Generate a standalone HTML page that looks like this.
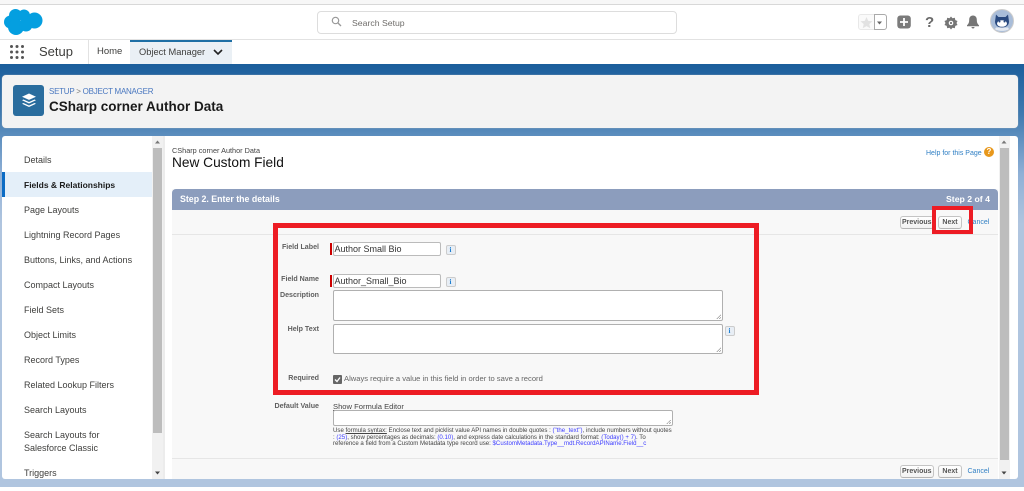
<!DOCTYPE html>
<html><head><meta charset="utf-8"><style>
html,body{margin:0;padding:0;background:#fff}
body{width:1024px;height:491px;position:relative;overflow:hidden;font-family:"Liberation Sans",sans-serif;color:#333}
#w{position:absolute;left:0;top:0;width:1024px;height:491px;overflow:hidden;background:#fff;filter:blur(.35px)}
.a{position:absolute;white-space:nowrap}
.side{left:24px;font-size:9px;color:#3e3e3c;line-height:13px}
.lbl{font-size:7.1px;font-weight:bold;color:#5f5f5f;text-align:right;width:60px;line-height:10px}
.inp{background:#fff;border:1px solid #bbb;border-radius:2px;box-sizing:border-box;font-size:9px;line-height:12px;padding-left:1px;color:#333}
.ta{background:#fff;border:1px solid #b0b0b0;border-radius:2px;box-sizing:border-box}
.ta:after{content:"";position:absolute;right:1px;bottom:1px;width:5px;height:5px;background:linear-gradient(135deg,transparent 55%,#999 55%,#999 65%,transparent 65%,transparent 78%,#999 78%,#999 90%,transparent 90%)}
.i{width:10px;height:10px;box-sizing:border-box;background:#e8eef5;border:1px solid #ccc;border-radius:2px;font-size:7px;font-weight:bold;color:#1f7fd0;text-align:center;line-height:8px;font-family:"Liberation Serif",serif}
.btn{background:linear-gradient(#fff,#f2f2f2);border:1px solid #c4c4c4;border-bottom-color:#b5b5b5;border-radius:3px;box-sizing:border-box;font-size:7px;font-weight:bold;color:#555;text-align:center;line-height:10px;padding-top:1px;height:13px}
.blue{color:#2f7fc4}
.hint{font-size:6.1px;line-height:7px;color:#444;left:333px}
.hint b{font-weight:normal;color:#3d3dff}
.bar{background:#c00;width:2px;height:12px;left:330px}
</style></head><body><div id="w">
<div class="a" style="left:0;top:0;width:1024px;height:5px;background:#f7f7f7;border-bottom:1px solid #d8d8d8;box-sizing:border-box"></div>
<svg class="a" style="left:0;top:0" width="50" height="40" viewBox="0 0 50 40" fill="#049fe0"><circle cx="10.500" cy="22" r="6.500"/><circle cx="15.500" cy="15.500" r="6.500"/><circle cx="24" cy="15.500" r="6"/><circle cx="34.500" cy="20.500" r="8"/><circle cx="16" cy="27" r="8"/><circle cx="26" cy="25" r="6.500"/></svg>
<div class="a" style="left:317px;top:11px;width:360px;height:23px;border:1px solid #ddd;border-radius:4px;box-sizing:border-box;background:#fff"></div>
<svg class="a" style="left:331px;top:16px" width="11" height="11" viewBox="0 0 11 11"><circle cx="4.500" cy="4.500" r="3.200" fill="none" stroke="#999" stroke-width="1.200"/><path d="M7 7l3 3" stroke="#999" stroke-width="1.300"/></svg>
<div class="a" style="left:352px;top:16.500px;font-size:8.700px;color:#706e6b;line-height:12px">Search Setup</div>
<div class="a" style="left:858px;top:14px;width:29px;height:16px;border:1px solid #e8e8e8;border-radius:3px;box-sizing:border-box;background:#fafafa"></div>
<div class="a" style="left:874px;top:14px;width:13px;height:16px;border:1px solid #aaa;border-radius:0 3px 3px 0;box-sizing:border-box;background:#fff"></div>
<svg class="a" style="left:860px;top:16px" width="40" height="14" viewBox="0 0 40 14"><path d="M6.500 1l1.700 3.900 4.300.4-3.200 2.800 1 4.200-3.800-2.200-3.800 2.200 1-4.200-3.200-2.800 4.300-.4z" fill="#e2e2e2"/><path d="M17 5.500h5l-2.500 3z" fill="#666"/></svg>
<svg class="a" style="left:896px;top:14px" width="16" height="16" viewBox="0 0 16 16"><rect x="1.300" y="1.500" width="13.500" height="13" rx="3" fill="#7b7b7b"/><path d="M8 4v8M4 8h8" stroke="#fff" stroke-width="1.800"/></svg>
<div class="a" style="left:925px;top:13.500px;font-size:15px;color:#6a6a6a;line-height:18px;font-weight:bold">?</div>
<svg class="a" style="left:944px;top:16px" width="14" height="14" viewBox="0 0 14 14"><path d="M7 .5l1.500 1.800 2.300-.5.500 2.300 2.200.9-1 2 1 2-2.200.9-.5 2.300-2.300-.5L7 13.500l-1.500-1.800-2.300.5-.5-2.300L.5 9l1-2-1-2 2.200-.9.500-2.300 2.300.5z" fill="#757575"/><circle cx="7" cy="7" r="2.300" fill="#fff"/><circle cx="7" cy="7" r="1.100" fill="#757575"/></svg>
<svg class="a" style="left:966px;top:15px" width="14" height="14" viewBox="0 0 14 14"><path d="M7 .5c2.500 0 3.800 1.800 3.800 4.200 0 3 .8 4.200 2.200 5.600v.9H1v-.9c1.400-1.400 2.200-2.600 2.200-5.600C3.200 2.300 4.500.5 7 .5z" fill="#757575"/><path d="M5.500 12h3a1.500 1.500 0 0 1-3 0z" fill="#757575"/></svg>
<svg class="a" style="left:990px;top:9px" width="24" height="24" viewBox="0 0 24 24"><circle cx="12" cy="12" r="11.500" fill="#a9bdd9" stroke="#ccc"/><path d="M6 5.500l2.500 2.500h7L18 5.500l1 7c0 4-3 6-7 6s-7-2-7-6z" fill="#2a4a80"/><ellipse cx="12" cy="14.500" rx="5" ry="3.300" fill="#fff"/><circle cx="9.500" cy="12.500" r="1" fill="#2a4a80"/><circle cx="14.500" cy="12.500" r="1" fill="#2a4a80"/><path d="M5 20c2 2.500 12 2.500 14 0l-1-1.500H6z" fill="#e4e9f1"/></svg>
<div class="a" style="left:0;top:39px;width:1024px;height:1px;background:#e2e2e2"></div>
<svg class="a" style="left:9px;top:44px" width="16" height="16" viewBox="0 0 16 16" fill="#555"><circle cx="2.500" cy="2.500" r="1.500"/><circle cx="8" cy="2.500" r="1.500"/><circle cx="13.500" cy="2.500" r="1.500"/><circle cx="2.500" cy="8" r="1.500"/><circle cx="8" cy="8" r="1.500"/><circle cx="13.500" cy="8" r="1.500"/><circle cx="2.500" cy="13.500" r="1.500"/><circle cx="8" cy="13.500" r="1.500"/><circle cx="13.500" cy="13.500" r="1.500"/></svg>
<div class="a" style="left:39px;top:44px;font-size:13px;color:#3e3e3c;line-height:16px">Setup</div>
<div class="a" style="left:88px;top:40px;width:1px;height:24px;background:#e2e2e2"></div>
<div class="a" style="left:97px;top:46px;font-size:9.500px;color:#3e3e3c;line-height:12px">Home</div>
<div class="a" style="left:130px;top:40px;width:102px;height:24px;background:#eaf0f5;border-top:2px solid #1e6fa5;box-sizing:border-box"></div>
<div class="a" style="left:139px;top:46px;font-size:9.300px;color:#3e3e3c;line-height:12px">Object Manager</div>
<svg class="a" style="left:213px;top:49px" width="10" height="7" viewBox="0 0 10 7"><path d="M1 1l4 4 4-4" fill="none" stroke="#222" stroke-width="1.600"/></svg>

<div class="a" style="left:0;top:64px;width:1024px;height:423px;background:linear-gradient(#1b5e9c 0,#3f7ab0 50px,#8fb0d6 110px,#b0c5df 160px,#b0c5df 100%)"></div>
<div class="a" style="left:2px;top:75px;width:1016px;height:53px;background:#f3f3f3;border-radius:4px;box-shadow:0 0 1px #bbb"></div>
<div class="a" style="left:13px;top:85px;width:31px;height:31px;background:#2a6d9e;border-radius:3px"></div>
<svg class="a" style="left:21px;top:93px" width="16" height="15" viewBox="0 0 16 15"><path d="M8 .5l7 3.200-7 3.200-7-3.200z" fill="#fff"/><path d="M2.500 6.500L8 9l5.500-2.500 1.500.8L8 10.500 1 7.300z" fill="#fff"/><path d="M2.500 10L8 12.500 13.500 10l1.500.8L8 14 1 10.800z" fill="#fff"/></svg>
<div class="a" style="left:49px;top:86px;font-size:8px;letter-spacing:-.25px;line-height:11px;color:#4a78c0">SETUP <span style="color:#777">&gt;</span> OBJECT MANAGER</div>
<div class="a" style="left:49px;top:98px;font-size:13.500px;font-weight:bold;line-height:17px;color:#1a1a1a">CSharp corner Author Data</div>

<div class="a" style="left:2px;top:136px;width:163px;height:343px;background:#fff;border-radius:3px 0 0 3px"></div>
<div class="a" style="left:2px;top:172px;width:150px;height:25px;background:#e4eff9"></div>
<div class="a" style="left:2px;top:172px;width:3px;height:25px;background:#0b6bc4"></div>
<div class="a side" style="top:154px">Details</div>
<div class="a side" style="top:179px;font-weight:bold;font-size:8.500px;color:#1b1b1b">Fields &amp; Relationships</div>
<div class="a side" style="top:204px">Page Layouts</div>
<div class="a side" style="top:229px">Lightning Record Pages</div>
<div class="a side" style="top:254px">Buttons, Links, and Actions</div>
<div class="a side" style="top:279px">Compact Layouts</div>
<div class="a side" style="top:304px">Field Sets</div>
<div class="a side" style="top:329px">Object Limits</div>
<div class="a side" style="top:354px">Record Types</div>
<div class="a side" style="top:379px">Related Lookup Filters</div>
<div class="a side" style="top:404px">Search Layouts</div>
<div class="a side" style="top:429px">Search Layouts for</div>
<div class="a side" style="top:442px">Salesforce Classic</div>
<div class="a side" style="top:467px">Triggers</div>
<div class="a" style="left:152px;top:136px;width:11px;height:343px;background:#f1f1f1"></div>
<div class="a" style="left:153px;top:148px;width:9px;height:285px;background:#bdbdbd"></div>
<svg class="a" style="left:153px;top:139px" width="9" height="6"><path d="M2 4.500h5L4.500 1.500z" fill="#777"/></svg>
<svg class="a" style="left:153px;top:470px" width="9" height="6"><path d="M2 1.500h5L4.500 4.500z" fill="#444"/></svg>

<div class="a" style="left:163px;top:136px;width:855px;height:343px;background:#fff;border-radius:0 3px 3px 0"></div>
<div class="a" style="left:163px;top:136px;width:2px;height:343px;background:#ececec"></div>
<div class="a" style="left:172px;top:146px;font-size:7.300px;line-height:9px;color:#444">CSharp corner Author Data</div>
<div class="a" style="left:172px;top:154px;font-size:13.700px;line-height:17px;color:#111">New Custom Field</div>
<div class="a blue" style="left:926px;top:149px;font-size:7px;line-height:10px">Help for this Page</div>
<div class="a" style="left:984px;top:147px;width:10px;height:10px;border-radius:50%;background:#e8981c;color:#fff;font-size:8px;font-weight:bold;text-align:center;line-height:10px">?</div>

<div class="a" style="left:172px;top:189px;width:826px;height:290px;background:#f8f8f8"></div>
<div class="a" style="left:172px;top:188.500px;width:826px;height:21px;background:#8c9dbd;border-radius:4px 4px 0 0"></div>
<div class="a" style="left:180px;top:193.500px;font-size:8.800px;font-weight:bold;color:#fff;line-height:11px">Step 2. Enter the details</div>
<div class="a" style="left:946px;top:193.500px;font-size:8.700px;font-weight:bold;color:#fff;line-height:11px">Step 2 of 4</div>
<div class="a" style="left:172px;top:234px;width:826px;height:1px;background:#e6e6e6"></div>
<div class="a" style="left:172px;top:458px;width:826px;height:1px;background:#e6e6e6"></div>

<div class="a btn" style="left:899.500px;top:216px;width:34.500px">Previous</div>
<div class="a btn" style="left:938px;top:216px;width:24px">Next</div>
<div class="a blue" style="left:967.500px;top:218px;font-size:7px;line-height:10px">Cancel</div>
<div class="a btn" style="left:899.500px;top:465px;width:34.500px">Previous</div>
<div class="a btn" style="left:938px;top:465px;width:24px">Next</div>
<div class="a blue" style="left:967.500px;top:467px;font-size:7px;line-height:10px">Cancel</div>

<div class="a lbl" style="left:259px;top:242px">Field Label</div>
<div class="a bar" style="top:243px"></div>
<div class="a inp" style="left:332.500px;top:242px;width:108.500px;height:14px">Author Small Bio</div>
<div class="a i" style="left:445.500px;top:245px">i</div>
<div class="a lbl" style="left:259px;top:273.500px">Field Name</div>
<div class="a bar" style="top:275px"></div>
<div class="a inp" style="left:332.500px;top:274px;width:108.500px;height:14px">Author_Small_Bio</div>
<div class="a i" style="left:445.500px;top:277px">i</div>
<div class="a lbl" style="left:259px;top:290px">Description</div>
<div class="a ta" style="left:333px;top:290px;width:389.500px;height:31px"></div>
<div class="a lbl" style="left:259px;top:324px">Help Text</div>
<div class="a ta" style="left:333px;top:324px;width:389.500px;height:30px"></div>
<div class="a i" style="left:724.500px;top:326px">i</div>
<div class="a lbl" style="left:259px;top:373px">Required</div>
<div class="a" style="left:333px;top:375px;width:9px;height:9px;background:#666;border-radius:1px"></div>
<svg class="a" style="left:333px;top:375px" width="9" height="9"><path d="M2 4.500l2 2 3-4" fill="none" stroke="#fff" stroke-width="1.300"/></svg>
<div class="a" style="left:344px;top:373px;font-size:7.600px;line-height:11px;color:#666">Always require a value in this field in order to save a record</div>

<div class="a lbl" style="left:259px;top:401px">Default Value</div>
<div class="a" style="left:333px;top:400.500px;font-size:7.600px;line-height:11px;color:#444;text-decoration:underline">Show Formula Editor</div>
<div class="a ta" style="left:333px;top:410px;width:340px;height:16px"></div>
<div class="a hint" style="top:427px">Use <u>formula syntax:</u> Enclose text and picklist value API names in double quotes : <b>("the_text")</b>, include numbers without quotes</div>
<div class="a hint" style="top:433.500px">: <b>(25)</b>, show percentages as decimals: <b>(0.10)</b>, and express date calculations in the standard format: <b>(Today() + 7)</b>. To</div>
<div class="a hint" style="top:440px">reference a field from a Custom Metadata type record use: <b>$CustomMetadata.Type__mdt.RecordAPIName.Field__c</b></div>

<div class="a" style="left:999px;top:136px;width:10.500px;height:343px;background:#f1f1f1"></div>
<div class="a" style="left:999.500px;top:148px;width:9px;height:312px;background:#bdbdbd"></div>
<svg class="a" style="left:999px;top:139px" width="10" height="6"><path d="M2.500 4.500h5L5 1.500z" fill="#777"/></svg>
<svg class="a" style="left:999px;top:470px" width="10" height="6"><path d="M2.500 1.500h5L5 4.500z" fill="#444"/></svg>

<div class="a" style="left:273px;top:223px;width:486px;height:172px;border:5px solid #ed1c24;box-sizing:border-box"></div>
<div class="a" style="left:932px;top:206px;width:41px;height:28px;border:4px solid #ed1c24;box-sizing:border-box"></div>
</div></body></html>
